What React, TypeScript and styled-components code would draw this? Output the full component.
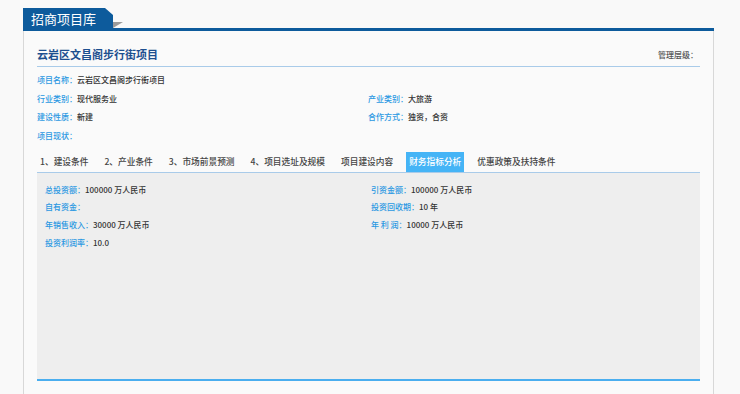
import { createGlobalStyle, styled } from "styled-components";

const GlobalStyle = createGlobalStyle`
  html, body {
    margin: 0;
    padding: 0;
    background-color: #f9f9f9;
    font-family: "Noto Sans CJK SC", "Noto Sans", sans-serif;
  }
`;

const Page = styled.div`
  width: 691px;
  padding: 8px 0 0 23px;
`;

const Header = styled.div`
  display: flex;
  height: 23px;
`;

const HeaderTab = styled.div`
  width: 90px;
  background-color: #0d5b9c;
  color: #ffffff;
  font-size: 13px;
  line-height: 22px;
  padding-left: 8px;
  box-sizing: border-box;
  clip-path: polygon(0 0, 82px 0, 90px 7px, 90px 100%, 0 100%);
`;

const HeaderRule = styled.div`
  flex: 1;
  position: relative;
  border-bottom: 3px solid #0d5b9c;

  &::before {
    content: "";
    position: absolute;
    left: 0;
    bottom: 0;
    width: 0;
    height: 0;
    border-top: 6px solid #9a9a9a;
    border-right: 10px solid transparent;
  }
`;

const Panel = styled.div`
  background-color: #fafafa;
  border: 1px solid #d8d8d8;
  border-top: none;
  padding: 0 13px 40px;
`;

const TitleRow = styled.div`
  display: flex;
  justify-content: space-between;
  align-items: center;
  padding: 13px 0 2px;
  height: 20px;
  border-bottom: 1px solid #a9cbe9;
`;

const Title = styled.h2`
  margin: 0;
  font-size: 11px;
  font-weight: 700;
  color: #1d4f8f;
`;

const Level = styled.span`
  font-size: 8px;
  font-weight: 500;
  color: #555555;
  padding-right: 2px;
`;

const InfoGrid = styled.div<{ $rowHeight: number; $firstCol: number }>`
  display: grid;
  grid-template-columns: ${(p) => p.$firstCol}px 1fr;
  grid-auto-rows: ${(p) => p.$rowHeight}px;
  align-items: center;
  font-size: 8px;
  font-weight: 500;
`;

const TopInfo = styled(InfoGrid)`
  margin-top: 3px;
`;

const Field = styled.div<{ $full?: boolean }>`
  grid-column: ${(p) => (p.$full ? "1 / span 2" : "auto")};
  color: #333333;
  white-space: nowrap;
`;

const Label = styled.span`
  color: #2b98e2;
`;

const Tabs = styled.div`
  display: flex;
  gap: 10px;
  margin-top: 7px;
  height: 20px;
  border-bottom: 1px solid #a9cbe9;
`;

const Tab = styled.div<{ $active?: boolean }>`
  padding: 0 3px;
  font-size: 8.7px;
  font-weight: 500;
  line-height: 20px;
  color: ${(p) => (p.$active ? "#ffffff" : "#444444")};
  background-color: ${(p) => (p.$active ? "#45b4f6" : "transparent")};
  white-space: nowrap;
`;

const Content = styled.div`
  background-color: #eeeeee;
  height: 199px;
  padding: 7px 8px 0;
  border-bottom: 2px solid #4aaeef;
`;

const tabs = [
  "1、建设条件",
  "2、产业条件",
  "3、市场前景预测",
  "4、项目选址及规模",
  "项目建设内容",
  "财务指标分析",
  "优惠政策及扶持条件",
];

const finance: [string, string][] = [
  ["总投资额：", "100000 万人民币"],
  ["引资金额：", "100000 万人民币"],
  ["自有资金：", ""],
  ["投资回收期：", "10 年"],
  ["年销售收入：", "30000 万人民币"],
  ["年 利 润：", "10000 万人民币"],
  ["投资利润率：", "10.0"],
];

const App = () => {
  return (
    <>
      <GlobalStyle />
      <Page>
        <Header>
          <HeaderTab>招商项目库</HeaderTab>
          <HeaderRule />
        </Header>
        <Panel>
          <TitleRow>
            <Title>云岩区文昌阁步行街项目</Title>
            <Level>管理层级：</Level>
          </TitleRow>
          <TopInfo $rowHeight={18.8} $firstCol={331}>
            <Field $full>
              <Label>项目名称：</Label>云岩区文昌阁步行街项目
            </Field>
            <Field>
              <Label>行业类别：</Label>现代服务业
            </Field>
            <Field>
              <Label>产业类别：</Label>大旅游
            </Field>
            <Field>
              <Label>建设性质：</Label>新建
            </Field>
            <Field>
              <Label>合作方式：</Label>独资，合资
            </Field>
            <Field $full>
              <Label>项目现状：</Label>
            </Field>
          </TopInfo>
          <Tabs>
            {tabs.map((t) => (
              <Tab key={t} $active={t === "财务指标分析"}>
                {t}
              </Tab>
            ))}
          </Tabs>
          <Content>
            <InfoGrid $rowHeight={17.8} $firstCol={326}>
              {finance.map(([label, value]) => (
                <Field key={label}>
                  <Label>{label}</Label>
                  {value}
                </Field>
              ))}
            </InfoGrid>
          </Content>
        </Panel>
      </Page>
    </>
  );
};

export default App;
